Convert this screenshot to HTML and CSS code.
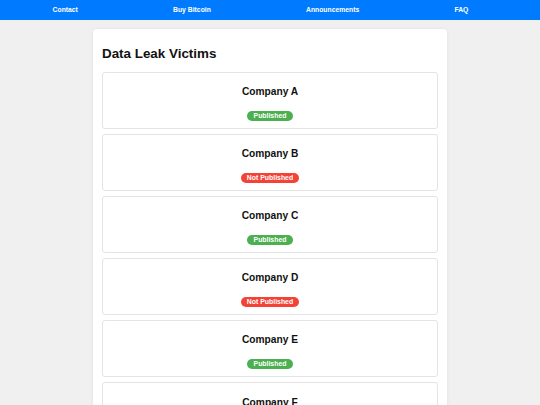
FILE: index.html
```html
<!DOCTYPE html>
<html lang="en">
<head>
<meta charset="utf-8">
<title>Data Leak Victims</title>
<link rel="stylesheet" href="styles.css">
</head>
<body>
<nav class="topnav">
  <a class="nav-link" href="#">Contact</a>
  <a class="nav-link" href="#">Buy Bitcoin</a>
  <a class="nav-link" href="#">Announcements</a>
  <a class="nav-link" href="#">FAQ</a>
</nav>
<main class="container">
  <h2 class="page-title">Data Leak Victims</h2>
  <div class="victim">
    <h3 class="victim-name">Company A</h3>
    <span class="badge badge-published">Published</span>
  </div>
  <div class="victim">
    <h3 class="victim-name">Company B</h3>
    <span class="badge badge-unpublished">Not Published</span>
  </div>
  <div class="victim">
    <h3 class="victim-name">Company C</h3>
    <span class="badge badge-published">Published</span>
  </div>
  <div class="victim">
    <h3 class="victim-name">Company D</h3>
    <span class="badge badge-unpublished">Not Published</span>
  </div>
  <div class="victim">
    <h3 class="victim-name">Company E</h3>
    <span class="badge badge-published">Published</span>
  </div>
  <div class="victim">
    <h3 class="victim-name">Company F</h3>
    <span class="badge badge-unpublished">Not Published</span>
  </div>
</main>
</body>
</html>
```
FILE: styles.css
```css
html, body {
  margin: 0;
  padding: 0;
}
body {
  background: #f0f0f0;
  font-family: "Liberation Sans", Arial, sans-serif;
  color: #111;
}
.topnav {
  height: 19.5px;
  background: #007bff;
  display: flex;
  align-items: center;
  justify-content: space-around;
  padding: 0 24px 0 5px;
}
.nav-link {
  color: #fff;
  text-decoration: none;
  font-size: 6.8px;
  line-height: 8px;
  font-weight: bold;
}
.container {
  width: 336px;
  margin: 9.5px auto 0;
  padding: 16.8px 9px 10px;
  background: #fff;
  border-radius: 4px;
  box-shadow: 0 0 4px rgba(0, 0, 0, 0.06);
}
.page-title {
  margin: 0 0 10.4px;
  font-size: 13.4px;
  line-height: 15.4px;
  font-weight: bold;
}
.victim {
  border: 1px solid #e4e4e4;
  border-radius: 3px;
  padding: 13.5px 8px 6.5px;
  margin-bottom: 5.1px;
  display: flex;
  flex-direction: column;
  align-items: center;
}
.victim-name {
  margin: 0 0 12.5px;
  font-size: 10.2px;
  line-height: 12px;
  font-weight: bold;
}
.badge {
  display: inline-block;
  height: 10.5px;
  line-height: 10.5px;
  padding: 0 6.3px;
  border-radius: 6px;
  color: #fff;
  font-size: 6.9px;
  font-weight: bold;
}
.badge-published {
  background: #4caf50;
}
.badge-unpublished {
  background: #f44336;
}
```
